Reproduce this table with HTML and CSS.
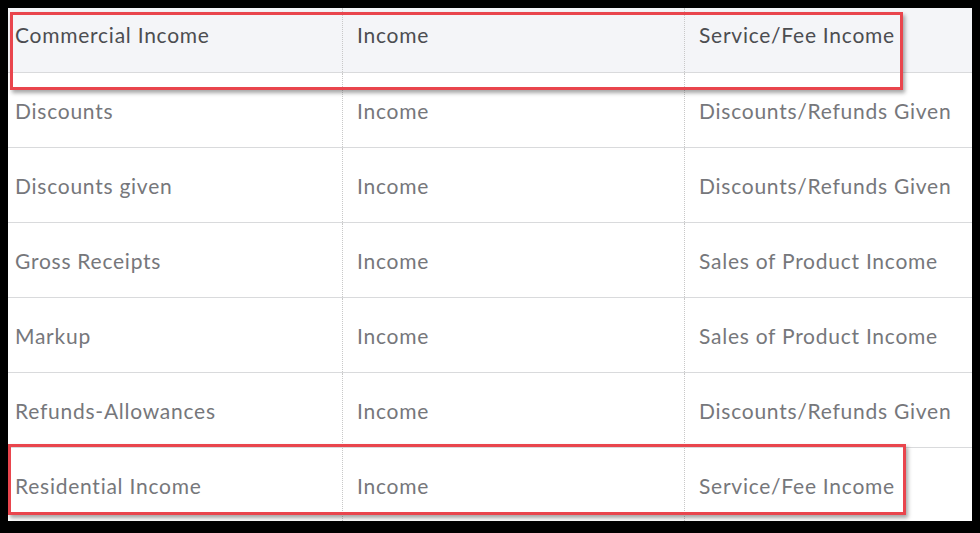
FILE: index.html
```html
<!DOCTYPE html>
<html>
<head>
<meta charset="utf-8">
<link rel="stylesheet" href="styles.css">
</head>
<body>
<div class="frame">
  <div class="sheet">
    <div class="row head">
      <div class="cell first">Commercial Income</div>
      <div class="cell">Income</div>
      <div class="cell last">Service/Fee Income</div>
    </div>
    <div class="row">
      <div class="cell first">Discounts</div>
      <div class="cell">Income</div>
      <div class="cell last">Discounts/Refunds Given</div>
    </div>
    <div class="row">
      <div class="cell first">Discounts given</div>
      <div class="cell">Income</div>
      <div class="cell last">Discounts/Refunds Given</div>
    </div>
    <div class="row">
      <div class="cell first">Gross Receipts</div>
      <div class="cell">Income</div>
      <div class="cell last">Sales of Product Income</div>
    </div>
    <div class="row">
      <div class="cell first">Markup</div>
      <div class="cell">Income</div>
      <div class="cell last">Sales of Product Income</div>
    </div>
    <div class="row">
      <div class="cell first">Refunds-Allowances</div>
      <div class="cell">Income</div>
      <div class="cell last">Discounts/Refunds Given</div>
    </div>
    <div class="row tail">
      <div class="cell first">Residential Income</div>
      <div class="cell">Income</div>
      <div class="cell last">Service/Fee Income</div>
    </div>
  </div>
  <div class="mark mark-top"></div>
  <div class="mark mark-bottom"></div>
</div>
</body>
</html>
```
FILE: styles.css
```css
html, body {
  margin: 0;
  padding: 0;
  background: #000;
}
.frame {
  position: relative;
  width: 980px;
  height: 533px;
  padding: 8px 8px 12px 8px;
  box-sizing: border-box;
}
.sheet {
  background: #fff;
  height: 100%;
  overflow: hidden;
  font-family: "Lato", "Open Sans", sans-serif;
  font-size: 21px;
  font-weight: 400;
  color: #76777b;
}
.row {
  display: grid;
  grid-template-columns: 334px 342px 288px;
  height: 75px;
  border-bottom: 1.5px solid #d9dadc;
  box-sizing: border-box;
}
.row.head {
  height: 65px;
  background: #f4f5f8;
  color: #4c4d51;
}
.row.tail {
  border-bottom: none;
}
.cell {
  display: flex;
  align-items: center;
  padding-left: 14px;
  border-left: 1px dotted #c8c8c8;
  letter-spacing: 0.75px;
  white-space: nowrap;
}
.row.head .cell {
  align-items: flex-start;
  padding-top: 14px;
}
.cell.first {
  border-left: none;
  padding-left: 7px;
}
.mark {
  position: absolute;
  border: 3px solid #e9454d;
  box-shadow: 2px 3px 4px rgba(0, 0, 0, 0.35);
  box-sizing: border-box;
}
.mark-top {
  left: 10px;
  top: 12px;
  width: 893px;
  height: 78px;
}
.mark-bottom {
  left: 8px;
  top: 444px;
  width: 898px;
  height: 71px;
}
```
